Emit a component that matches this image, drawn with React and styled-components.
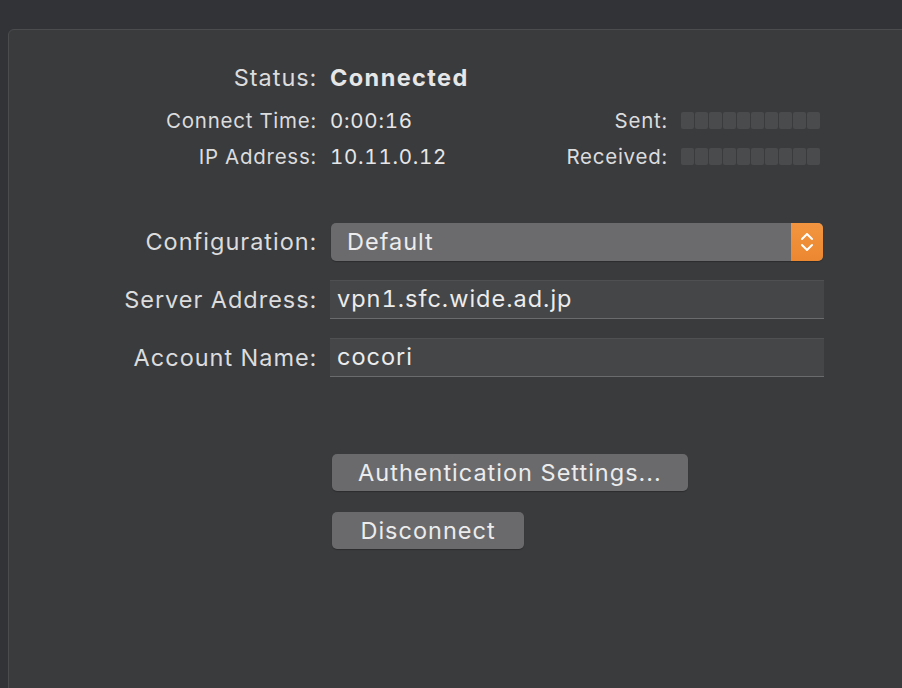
import React from "react";
import styled, { createGlobalStyle } from "styled-components";

const GlobalStyle = createGlobalStyle`
  html, body {
    margin: 0;
    padding: 0;
    background: #323336;
    height: 100%;
    overflow: hidden;
  }
  body {
    font-family: Inter, "Noto Sans", "Liberation Sans", sans-serif;
    font-variant-numeric: tabular-nums;
    color: #e2e2e3;
  }
`;

// two text sizes in the window: small stats and the big form labels
const small = `font-size: 20.5px; letter-spacing: 0.75px;`;
const big = `font-size: 23.5px; letter-spacing: 1px;`;

const Page = styled.div`
  width: 902px;
  height: 688px;
  padding: 29px 0 0 8px;
  box-sizing: border-box;
  overflow: hidden;
`;

const Panel = styled.div`
  width: 920px;
  height: 700px;
  background: #3a3b3d;
  border: 1px solid #4b4c4e;
  border-radius: 6px;
  box-sizing: border-box;
  padding-top: 29px;
`;

const StatusRow = styled.div`
  display: grid;
  grid-template-columns: 307px 1fr;
  column-gap: 14px;
  align-items: center;
  height: 36px;
  margin-bottom: 7px;
`;

const StatsGrid = styled.div`
  display: grid;
  grid-template-columns: 307px 200px 123px 140px;
  column-gap: 14px;
  grid-auto-rows: 36px;
  align-items: center;
`;

const Label = styled.div`
  text-align: right;
  ${(p) => (p.big ? big : small)}
  margin-right: ${(p) => (p.big ? -1 : -0.75)}px;
  color: #dcdcdd;
  white-space: nowrap;
`;

const Value = styled.div`
  ${(p) => (p.big ? big : small)}
  font-weight: ${(p) => (p.bold ? 700 : 400)};
  letter-spacing: ${(p) => (p.bold ? "1.4px" : "")};
  color: #e6e6e7;
  white-space: nowrap;
`;

const Meter = styled.div`
  display: flex;
  gap: 1px;
  height: 17px;
`;

const Cell = styled.span`
  width: 13px;
  height: 17px;
  background: #4a4b4d;
  border-radius: 2px;
`;

const FormGrid = styled.div`
  display: grid;
  grid-template-columns: 307px 494px;
  column-gap: 14px;
  row-gap: 19px;
  grid-auto-rows: 39px;
  align-items: center;
  margin-top: 48px;
`;

const Popup = styled.div`
  display: flex;
  height: 38px;
  margin: 0 1px;
  border-radius: 5px;
  overflow: hidden;
  background: #6b6b6d;
  box-shadow: 0 1px 1px rgba(0, 0, 0, 0.25);
`;

const PopupText = styled.div`
  flex: 1;
  padding-left: 16px;
  ${big}
  line-height: 38px;
  color: #ececec;
`;

const PopupArrows = styled.div`
  width: 32px;
  background: linear-gradient(#f29540, #ec8730);
  display: flex;
  align-items: center;
  justify-content: center;
`;

const Field = styled.div`
  height: 39px;
  box-sizing: border-box;
  background: #454648;
  border-top: 1px solid #4f5052;
  border-bottom: 1px solid #6a6b6d;
  padding-left: 7px;
  ${big}
  line-height: 36px;
  color: #ececec;
`;

const Buttons = styled.div`
  display: flex;
  flex-direction: column;
  align-items: flex-start;
  gap: 21px;
  margin: 77px 0 0 323px;
`;

const Button = styled.button`
  height: 37px;
  width: ${(p) => p.w}px;
  border: none;
  border-radius: 5px;
  background: #6a6a6c;
  box-shadow: 0 1px 1px rgba(0, 0, 0, 0.25);
  color: #ececec;
  font-family: inherit;
  ${big}
  padding: 0;
`;

const Arrows = () => (
  <svg width="16" height="26" viewBox="0 0 16 26" fill="none">
    <path d="M3 10 L8 5 L13 10" stroke="#fff" strokeWidth="2" strokeLinecap="round" strokeLinejoin="round" />
    <path d="M3 16 L8 21 L13 16" stroke="#fff" strokeWidth="2" strokeLinecap="round" strokeLinejoin="round" />
  </svg>
);

const Cells = () => (
  <Meter>
    {Array.from({ length: 10 }).map((_, i) => (
      <Cell key={i} />
    ))}
  </Meter>
);

const App = () => {
  return (
    <React.Fragment>
      <GlobalStyle />
      <Page>
        <Panel>
          <StatusRow>
            <Label big>Status:</Label>
            <Value big bold>Connected</Value>
          </StatusRow>
          <StatsGrid>
            <Label>Connect Time:</Label>
            <Value>0:00:16</Value>
            <Label>Sent:</Label>
            <Cells />
            <Label>IP Address:</Label>
            <Value>10.11.0.12</Value>
            <Label>Received:</Label>
            <Cells />
          </StatsGrid>

          <FormGrid>
            <Label big>Configuration:</Label>
            <Popup>
              <PopupText>Default</PopupText>
              <PopupArrows>
                <Arrows />
              </PopupArrows>
            </Popup>
            <Label big>Server Address:</Label>
            <Field>vpn1.sfc.wide.ad.jp</Field>
            <Label big>Account Name:</Label>
            <Field>cocori</Field>
          </FormGrid>

          <Buttons>
            <Button w={356}>Authentication Settings...</Button>
            <Button w={192}>Disconnect</Button>
          </Buttons>
        </Panel>
      </Page>
    </React.Fragment>
  );
};

export default App;
